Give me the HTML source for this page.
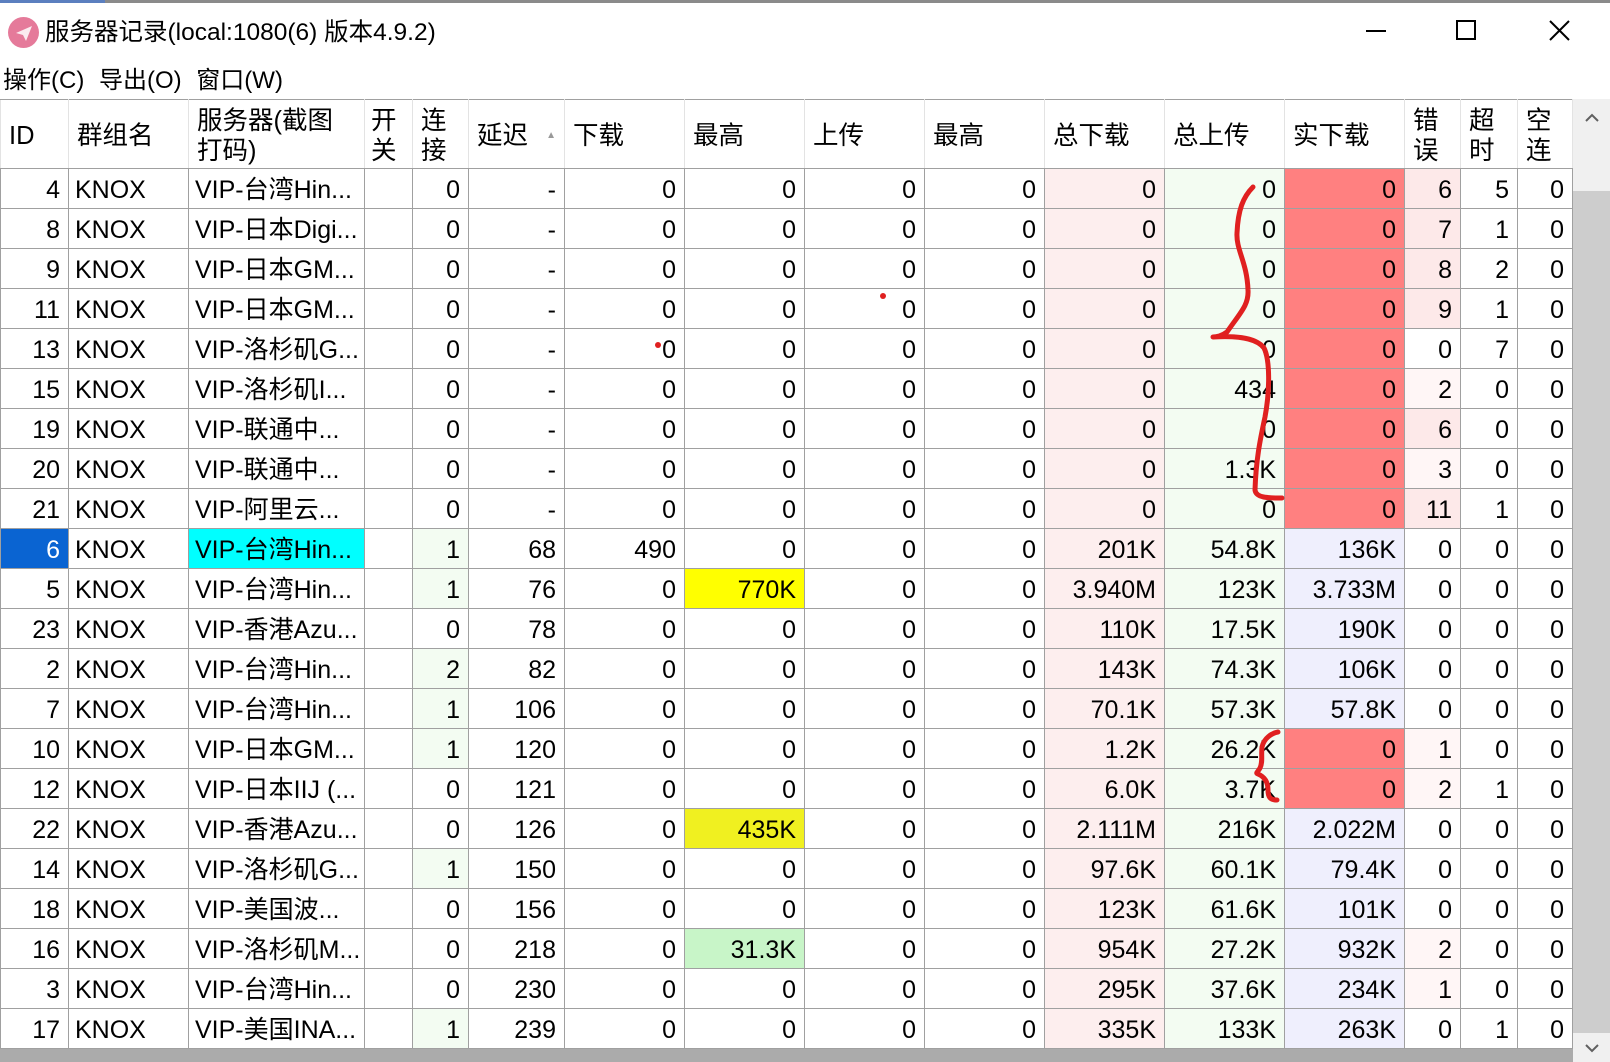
<!DOCTYPE html>
<html><head><meta charset="utf-8"><style>
*{margin:0;padding:0;box-sizing:border-box}
body{width:1610px;height:1062px;background:#fff;font-family:"Liberation Sans","Noto Sans CJK SC",sans-serif;position:relative;overflow:hidden;color:#000}
.topb{position:absolute;left:0;top:0;width:1610px;height:3px;background:#8a8a8a}
.topb i{position:absolute;left:0;top:0;width:105px;height:3px;background:#5b7fbf}
.title{position:absolute;left:45px;top:18px;font-size:24.5px;line-height:30px}
.icon{position:absolute;left:8px;top:17px;width:31px;height:31px;border-radius:50%;background:#e57a9a}
.menu{position:absolute;left:3px;top:66px;font-size:24px;line-height:30px;word-spacing:8px}
table{position:absolute;left:0;top:99px;border-collapse:collapse;table-layout:fixed;width:1573px;font-size:25px}
td{height:40px;border:1px solid #a0a0a0;text-align:right;padding:2px 8px 0 4px;white-space:nowrap;overflow:hidden;line-height:36px}
th{height:69px;border:1px solid #e3e3e3;border-top:1px solid #a0a0a0;border-bottom:1px solid #a0a0a0;font-weight:normal;text-align:left;padding:3px 8px 0;line-height:30px;vertical-align:middle;font-size:25.5px}
td.l{text-align:left;padding-left:6px}
.a{background:#fdeeee}.b{background:#f3fcf2}.r{background:#ff8080}.v{background:#efeffd}
.p{background:#fde9e9}.q{background:#fff6f6}.g{background:#f3fcf2}
.sel{background:#0a64d2;color:#fff}.cy{background:#00ffff}.y{background:#ffff00}.y2{background:#f0f020}.lg{background:#c8f5c8}
.sb{position:absolute;left:1573px;top:99px;width:37px;height:963px;background:#f0f0f0}
.thumb{position:absolute;left:1573px;top:191px;width:37px;height:842px;background:#cdcdcd}
.hs{position:absolute;left:0;top:1048px;width:1573px;height:14px;background:#ababab}
</style></head><body>
<div class="topb"><i></i></div>
<div class="icon"></div>
<svg style="position:absolute;left:8px;top:17px" width="31" height="31"><path d="M8 16 L24 9 L18 24 L15 18 Z" fill="#fff" opacity="0.85"/></svg>
<div class="title">服务器记录(local:1080(6) 版本4.9.2)</div>
<svg style="position:absolute;left:1360px;top:15px" width="230" height="35">
<line x1="6" y1="16" x2="26" y2="16" stroke="#000" stroke-width="2"/>
<rect x="97" y="6" width="18" height="18" fill="none" stroke="#000" stroke-width="2"/>
<path d="M190 6 L209 25 M209 6 L190 25" stroke="#000" stroke-width="2"/>
</svg>
<div class="menu">操作(C) 导出(O) 窗口(W)</div>
<div class="sb"></div><div class="thumb"></div><div class="hs"></div>
<svg style="position:absolute;left:1580px;top:108px" width="24" height="20"><path d="M6 13 L12 7 L18 13" fill="none" stroke="#606060" stroke-width="2"/></svg>
<svg style="position:absolute;left:1580px;top:1040px" width="24" height="20"><path d="M6 5 L12 11 L18 5" fill="none" stroke="#606060" stroke-width="2"/></svg>
<table>
<colgroup><col style="width:68px"><col style="width:120px"><col style="width:176px"><col style="width:48px"><col style="width:56px"><col style="width:96px"><col style="width:120px"><col style="width:120px"><col style="width:120px"><col style="width:120px"><col style="width:120px"><col style="width:120px"><col style="width:120px"><col style="width:56px"><col style="width:57px"><col style="width:55px"></colgroup>
<tr><th>ID</th><th>群组名</th><th>服务器(截图<br>打码)</th><th style="padding:3px 6px 0">开<br>关</th><th>连<br>接</th><th>延迟<span style="float:right;font-size:10px;color:#999">▲</span></th><th>下载</th><th>最高</th><th>上传</th><th>最高</th><th>总下载</th><th>总上传</th><th>实下载</th><th>错<br>误</th><th>超<br>时</th><th>空<br>连</th></tr>
<tr><td>4</td><td class="l">KNOX</td><td class="l">VIP-台湾Hin...</td><td></td><td>0</td><td>-</td><td>0</td><td>0</td><td>0</td><td>0</td><td class="a">0</td><td class="b">0</td><td class="r">0</td><td class="p">6</td><td>5</td><td>0</td></tr>
<tr><td>8</td><td class="l">KNOX</td><td class="l">VIP-日本Digi...</td><td></td><td>0</td><td>-</td><td>0</td><td>0</td><td>0</td><td>0</td><td class="a">0</td><td class="b">0</td><td class="r">0</td><td class="p">7</td><td>1</td><td>0</td></tr>
<tr><td>9</td><td class="l">KNOX</td><td class="l">VIP-日本GM...</td><td></td><td>0</td><td>-</td><td>0</td><td>0</td><td>0</td><td>0</td><td class="a">0</td><td class="b">0</td><td class="r">0</td><td class="p">8</td><td>2</td><td>0</td></tr>
<tr><td>11</td><td class="l">KNOX</td><td class="l">VIP-日本GM...</td><td></td><td>0</td><td>-</td><td>0</td><td>0</td><td>0</td><td>0</td><td class="a">0</td><td class="b">0</td><td class="r">0</td><td class="p">9</td><td>1</td><td>0</td></tr>
<tr><td>13</td><td class="l">KNOX</td><td class="l">VIP-洛杉矶G...</td><td></td><td>0</td><td>-</td><td>0</td><td>0</td><td>0</td><td>0</td><td class="a">0</td><td class="b">0</td><td class="r">0</td><td>0</td><td>7</td><td>0</td></tr>
<tr><td>15</td><td class="l">KNOX</td><td class="l">VIP-洛杉矶I...</td><td></td><td>0</td><td>-</td><td>0</td><td>0</td><td>0</td><td>0</td><td class="a">0</td><td class="b">434</td><td class="r">0</td><td class="q">2</td><td>0</td><td>0</td></tr>
<tr><td>19</td><td class="l">KNOX</td><td class="l">VIP-联通中...</td><td></td><td>0</td><td>-</td><td>0</td><td>0</td><td>0</td><td>0</td><td class="a">0</td><td class="b">0</td><td class="r">0</td><td class="p">6</td><td>0</td><td>0</td></tr>
<tr><td>20</td><td class="l">KNOX</td><td class="l">VIP-联通中...</td><td></td><td>0</td><td>-</td><td>0</td><td>0</td><td>0</td><td>0</td><td class="a">0</td><td class="b">1.3K</td><td class="r">0</td><td class="q">3</td><td>0</td><td>0</td></tr>
<tr><td>21</td><td class="l">KNOX</td><td class="l">VIP-阿里云...</td><td></td><td>0</td><td>-</td><td>0</td><td>0</td><td>0</td><td>0</td><td class="a">0</td><td class="b">0</td><td class="r">0</td><td class="p">11</td><td>1</td><td>0</td></tr>
<tr><td class="sel">6</td><td class="l">KNOX</td><td class="l cy">VIP-台湾Hin...</td><td></td><td class="g">1</td><td>68</td><td>490</td><td>0</td><td>0</td><td>0</td><td class="a">201K</td><td class="b">54.8K</td><td class="v">136K</td><td>0</td><td>0</td><td>0</td></tr>
<tr><td>5</td><td class="l">KNOX</td><td class="l">VIP-台湾Hin...</td><td></td><td class="g">1</td><td>76</td><td>0</td><td class="y">770K</td><td>0</td><td>0</td><td class="a">3.940M</td><td class="b">123K</td><td class="v">3.733M</td><td>0</td><td>0</td><td>0</td></tr>
<tr><td>23</td><td class="l">KNOX</td><td class="l">VIP-香港Azu...</td><td></td><td>0</td><td>78</td><td>0</td><td>0</td><td>0</td><td>0</td><td class="a">110K</td><td class="b">17.5K</td><td class="v">190K</td><td>0</td><td>0</td><td>0</td></tr>
<tr><td>2</td><td class="l">KNOX</td><td class="l">VIP-台湾Hin...</td><td></td><td class="g">2</td><td>82</td><td>0</td><td>0</td><td>0</td><td>0</td><td class="a">143K</td><td class="b">74.3K</td><td class="v">106K</td><td>0</td><td>0</td><td>0</td></tr>
<tr><td>7</td><td class="l">KNOX</td><td class="l">VIP-台湾Hin...</td><td></td><td class="g">1</td><td>106</td><td>0</td><td>0</td><td>0</td><td>0</td><td class="a">70.1K</td><td class="b">57.3K</td><td class="v">57.8K</td><td>0</td><td>0</td><td>0</td></tr>
<tr><td>10</td><td class="l">KNOX</td><td class="l">VIP-日本GM...</td><td></td><td class="g">1</td><td>120</td><td>0</td><td>0</td><td>0</td><td>0</td><td class="a">1.2K</td><td class="b">26.2K</td><td class="r">0</td><td class="q">1</td><td>0</td><td>0</td></tr>
<tr><td>12</td><td class="l">KNOX</td><td class="l">VIP-日本IIJ (...</td><td></td><td>0</td><td>121</td><td>0</td><td>0</td><td>0</td><td>0</td><td class="a">6.0K</td><td class="b">3.7K</td><td class="r">0</td><td class="q">2</td><td>1</td><td>0</td></tr>
<tr><td>22</td><td class="l">KNOX</td><td class="l">VIP-香港Azu...</td><td></td><td>0</td><td>126</td><td>0</td><td class="y2">435K</td><td>0</td><td>0</td><td class="a">2.111M</td><td class="b">216K</td><td class="v">2.022M</td><td>0</td><td>0</td><td>0</td></tr>
<tr><td>14</td><td class="l">KNOX</td><td class="l">VIP-洛杉矶G...</td><td></td><td class="g">1</td><td>150</td><td>0</td><td>0</td><td>0</td><td>0</td><td class="a">97.6K</td><td class="b">60.1K</td><td class="v">79.4K</td><td>0</td><td>0</td><td>0</td></tr>
<tr><td>18</td><td class="l">KNOX</td><td class="l">VIP-美国波...</td><td></td><td>0</td><td>156</td><td>0</td><td>0</td><td>0</td><td>0</td><td class="a">123K</td><td class="b">61.6K</td><td class="v">101K</td><td>0</td><td>0</td><td>0</td></tr>
<tr><td>16</td><td class="l">KNOX</td><td class="l">VIP-洛杉矶M...</td><td></td><td>0</td><td>218</td><td>0</td><td class="lg">31.3K</td><td>0</td><td>0</td><td class="a">954K</td><td class="b">27.2K</td><td class="v">932K</td><td class="q">2</td><td>0</td><td>0</td></tr>
<tr><td>3</td><td class="l">KNOX</td><td class="l">VIP-台湾Hin...</td><td></td><td>0</td><td>230</td><td>0</td><td>0</td><td>0</td><td>0</td><td class="a">295K</td><td class="b">37.6K</td><td class="v">234K</td><td class="q">1</td><td>0</td><td>0</td></tr>
<tr><td>17</td><td class="l">KNOX</td><td class="l">VIP-美国INA...</td><td></td><td class="g">1</td><td>239</td><td>0</td><td>0</td><td>0</td><td>0</td><td class="a">335K</td><td class="b">133K</td><td class="v">263K</td><td>0</td><td>1</td><td>0</td></tr>
</table>
<svg style="position:absolute;left:0;top:0" width="1610" height="1062">
<path d="M1253 187 C1243 197,1238 210,1237 233 C1236 250,1247 262,1248 290 C1249 305,1240 313,1227 332 C1222 336,1216 337,1213 337 C1230 336,1255 336,1264 348 C1270 360,1270 390,1265 417 C1260 440,1256 460,1255 490 C1256 498,1268 498,1282 498" fill="none" stroke="#e02020" stroke-width="5" stroke-linecap="round" stroke-linejoin="round"/>
<path d="M1278 732 C1272 733,1264 738,1262 747 C1261 755,1263 762,1260 768 C1258 772,1255 773,1258 774 C1265 777,1268 783,1268 790 C1268 797,1270 800,1277 800" fill="none" stroke="#e02020" stroke-width="5" stroke-linecap="round"/>
<circle cx="883" cy="296" r="3" fill="#e02020"/>
<circle cx="658" cy="345" r="3" fill="#e02020"/>
</svg>
</body></html>
